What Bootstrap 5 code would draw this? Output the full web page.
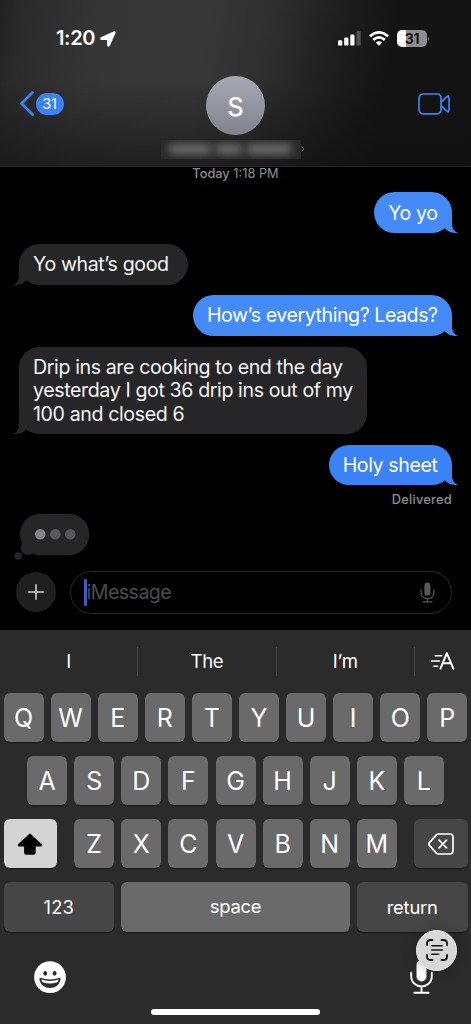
<!DOCTYPE html>
<html lang="en" data-bs-theme="dark">
<head>
<meta charset="utf-8">
<meta name="viewport" content="width=device-width, initial-scale=1">
<title>Messages</title>
<link href="https://cdn.jsdelivr.net/npm/bootstrap@5.3.0/dist/css/bootstrap.min.css" rel="stylesheet">
<style>
body{font-family:Inter,"Liberation Sans",sans-serif;background:#000;color:#fff;font-size:19.6px;line-height:23.4px;font-weight:400}
svg{display:block;flex:none}
.phone{width:471px;height:1024px;overflow:hidden}
.topbar{height:167px;border-bottom:1px solid #262626;
 background:linear-gradient(180deg,transparent 50%,rgba(16,16,16,.6) 100%),linear-gradient(100deg,#212121 0,#2a2a2a 5%,#353535 20%,#373737 42%,#303030 54%,#1c1c1c 70%,#141414 80%,#141414 100%)}
.status{height:76.4px;padding:1px 41px 0 56px}
.clock{font-size:20px;font-weight:600;letter-spacing:-.35px}
.batt{width:30px;height:17px;border-radius:5px;background:linear-gradient(90deg,#fff 0 9px,#8e8e8e 9px);color:#151515;font-size:14px;font-weight:700;line-height:17px;letter-spacing:-.3px}
.navrow{height:58.6px;padding:0 20px}
.unread{width:28px;height:22px;font-size:14.5px;line-height:22px;background:#3c82f7;letter-spacing:-.3px;transform:translateX(-8px)}
.avatar{width:59px;height:59px;background:linear-gradient(#a6a9b5,#80838c);font-size:25.5px;font-weight:500;padding-top:2px;margin-left:15px}
.contact{height:19px;margin-top:5px;padding-left:161px}
.redact{width:140px;height:19px;background:#292929;overflow:hidden;gap:3px;padding:0 7px}
.redact i{height:10px;border-radius:5px;background:#6e6e6e;filter:blur(4px)}
.stamp{font-size:12.8px;line-height:14px;color:#8e8e93;font-weight:400}
.thread{padding:11.4px 19px 0}
.bubble{padding:9.2px 14.4px 8.2px 14px;border-radius:20.5px;background:#262628;color:#f4f4f4;white-space:nowrap;margin-bottom:10.6px;letter-spacing:-.39px}
.bubble.roomy{padding-right:19.3px}
.bubble.mine{background:#448bf8;color:#fff}
.tail{bottom:0;left:-6px;color:#262628;transform:scaleX(-1)}
.mine .tail{left:auto;right:-6px;color:#448bf8;transform:none}
.bubble.latest{background:#3c82f7}
.latest .tail{color:#3c82f7}
.plus{width:40px;height:40px;background:#1f1f1f}
.field{height:43px;width:382px;border:1px solid #2a2a2c;padding:1px 16px 0 13px;color:#4c4c4e;letter-spacing:-.55px}
.caret{width:2.6px;height:27px;background:#4059c8;border-radius:1px}
.board{background:#2b2b2b;height:394px;padding:0 3.5px}
.sug{height:62.6px;margin:0 -3.5px;font-size:18.6px}
.sug .word{width:137.3px;letter-spacing:-.3px}
.rule{width:1px;height:29px;background:#424242}
.keys{gap:7.1px;height:49.3px;margin-bottom:14px}
.key{width:40px;height:49.3px;border-radius:6px;background:#6a6a6a;box-shadow:0 1.2px 0 #1b1b1b;font-size:25px;color:#fff;padding-top:2px}
.key.dim{background:#464646}
.key.wide{width:53.3px;padding-top:0}
.key.shift{background:#d4d4d4}
.key.caption-key{font-size:18.4px;letter-spacing:-.2px;width:110.6px}
.key.bar{padding:0 0 1px}
.scan{width:41px;height:41px;background:#d8d8d8;border:1px solid #eee;right:14px;top:929.5px;box-shadow:0 0 14px rgba(0,0,0,.25)}
.home{width:169px;height:6px;background:#fff;margin-top:15px}
</style>
</head>
<body>
<main class="phone position-relative d-flex flex-column">
 <header class="topbar">
  <div class="status d-flex align-items-center justify-content-between">
   <div class="d-flex align-items-center"><span class="clock">1:20</span>
    <svg class="ms-1" width="17" height="16" viewBox="-1 0 17 16"><path d="M1.2 6.9 13.7 1.1q1.6-.6 1 1L9.2 14.4q-1 1.5-1.4-.3V8.8q0-.5-.5-.5H1.7Q-.2 8 1.2 6.9Z" fill="#fff" stroke="#fff" stroke-width="1.4" stroke-linejoin="round"/></svg></div>
   <div class="d-flex align-items-center">
    <svg width="23" height="15" viewBox="0 0 23 15" fill="#fff"><rect y="9.3" width="4.2" height="5.3" rx="1.2"/><rect x="6.2" y="6.6" width="4.2" height="8" rx="1.2"/><rect x="12.3" y="3.6" width="4.2" height="11" rx="1.2"/><rect x="18.5" y="0" width="4.2" height="14.6" rx="1.2" fill="#515151"/></svg>
    <svg class="ms-2" width="20" height="15" viewBox="0 0 20 15" fill="none" stroke="#fff" stroke-width="2.7"><path d="M.9 5.2Q10-2.5 19.1 5.2M4.2 8.9Q10 4 15.8 8.9"/><path d="M6.8 11.6Q10 9 13.2 11.6L10 14.8Z" fill="#fff" stroke="none"/></svg>
    <div class="batt text-center ms-2">31</div>
    <svg width="3" height="6" viewBox="0 0 3 6"><path d="M1 .8Q3 3 1 5.2Z" fill="#8e8e8e"/></svg>
   </div>
  </div>
  <div class="navrow d-flex align-items-center justify-content-between">
   <div class="d-flex align-items-center" style="width:61px;margin-top:-4px">
    <svg width="14" height="25" viewBox="0 0 14 25" fill="none" stroke="#3c82f7" stroke-width="2.8" stroke-linecap="round" stroke-linejoin="round"><path d="M12.5 1.5 1.5 12.5 12.5 23.5"/></svg>
    <span class="unread rounded-pill text-center mx-auto">31</span></div>
   <div class="avatar rounded-circle d-flex align-items-center justify-content-center">S</div>
   <div class="d-flex justify-content-end" style="width:76px;margin-top:-4px;padding-right:1px"><svg width="32" height="22" viewBox="0 0 32 22" fill="none" stroke="#3c82f7" stroke-width="1.7" stroke-linejoin="round"><rect x="1" y="1" width="22" height="19.8" rx="4"/><path d="M23.2 8.8 29.1 3.5Q31 2.3 31 4.5V17.2Q31 19.4 29.1 18.2L23.2 13"/></svg></div>
  </div>
  <div class="contact d-flex align-items-center">
   <div class="redact d-flex align-items-center"><i style="width:44px"></i><i style="width:28px"></i><i style="width:46px"></i></div>
   <svg width="4" height="6" viewBox="0 0 4 6" fill="none" stroke="#777" stroke-width=".9"><path d="M.6.6 2.8 3 .6 5.4"/></svg>
  </div>
 </header>
 <div class="stamp text-center"><span class="fw-medium">Today</span> 1:18 PM</div>
 <section class="thread d-flex flex-column align-items-start">
  <div class="bubble mine align-self-end position-relative">Yo yo<svg class="tail position-absolute" width="20" height="20" viewBox="0 0 20 20"><path d="M14 0V10.5C14 15 16 18.6 20 20C14.5 20.4 10 18.7 7 15.4L0 8Z" fill="currentColor"/></svg></div>
  <div class="bubble roomy position-relative">Yo what’s good<svg class="tail position-absolute" width="20" height="20" viewBox="0 0 20 20"><path d="M14 0V10.5C14 15 16 18.6 20 20C14.5 20.4 10 18.7 7 15.4L0 8Z" fill="currentColor"/></svg></div>
  <div class="bubble mine align-self-end position-relative" style="letter-spacing:-.45px">How’s everything? Leads?<svg class="tail position-absolute" width="20" height="20" viewBox="0 0 20 20"><path d="M14 0V10.5C14 15 16 18.6 20 20C14.5 20.4 10 18.7 7 15.4L0 8Z" fill="currentColor"/></svg></div>
  <div class="bubble position-relative">Drip ins are cooking to end the day<br>yesterday I got 36 drip ins out of my<br>100 and closed 6<svg class="tail position-absolute" width="20" height="20" viewBox="0 0 20 20"><path d="M14 0V10.5C14 15 16 18.6 20 20C14.5 20.4 10 18.7 7 15.4L0 8Z" fill="currentColor"/></svg></div>
  <div class="bubble mine latest align-self-end position-relative mb-0">Holy sheet<svg class="tail position-absolute" width="20" height="20" viewBox="0 0 20 20"><path d="M14 0V10.5C14 15 16 18.6 20 20C14.5 20.4 10 18.7 7 15.4L0 8Z" fill="currentColor"/></svg></div>
  <div class="stamp fw-medium align-self-end" style="margin-top:7.5px;letter-spacing:.25px">Delivered</div>
  <svg width="79" height="47" viewBox="0 0 79 47" style="margin:5.6px 0 0 -8px"><g fill="#262628"><rect x="9" y=".7" width="69.3" height="41.6" rx="20.8"/><circle cx="16.5" cy="35.3" r="6.7"/><circle cx="7.2" cy="43" r="3.7"/></g><circle cx="29.2" cy="21.2" r="5.3" fill="#838385"/><circle cx="44.3" cy="21.2" r="5.3" fill="#58585a"/><circle cx="59.3" cy="21.2" r="5.3" fill="#58585a"/></svg>
 </section>
 <div class="d-flex align-items-center" style="padding:0 19px 0 16px;margin-top:11.4px">
  <div class="plus rounded-circle d-flex align-items-center justify-content-center"><svg width="16" height="16" viewBox="0 0 16 16" stroke="#aaa" stroke-width="2" stroke-linecap="round"><path d="M8 1V15M1 8H15"/></svg></div>
  <div class="field rounded-pill d-flex align-items-center ms-auto"><span class="caret"></span><span>iMessage</span>
   <svg class="ms-auto" width="15" height="21" viewBox="0 0 15 21" fill="none" stroke="#58585a" stroke-width="1.3" stroke-linecap="round"><rect x="4.4" y=".6" width="6" height="13" rx="3" fill="#58585a" stroke="none"/><path d="M1 8V10.5C1 18.6 13.9 18.6 13.9 10.5V8M7.5 16.6V19.8M3 19.8H12"/></svg></div>
 </div>
 <section class="board mt-auto">
  <div class="sug d-flex align-items-center">
   <div class="word text-center">I</div><div class="rule"></div><div class="word text-center">The</div><div class="rule"></div><div class="word text-center">I’m</div><div class="rule"></div>
   <svg style="margin-left:16px" width="25" height="18" viewBox="0 0 25 18" fill="none" stroke="#fff" stroke-linecap="round" stroke-linejoin="round"><path d="M9.5 16.6 15.8 1.2 22.3 16.6M11.7 11.3H19.9" stroke-width="2"/><path d="M4.2 3.7H10.8M.8 9H8.5M2.6 14.3H6.6" stroke-width="1.5"/></svg>
  </div>
  <div class="keys d-flex">
   <div class="key d-flex align-items-center justify-content-center">Q</div><div class="key d-flex align-items-center justify-content-center">W</div><div class="key d-flex align-items-center justify-content-center">E</div><div class="key d-flex align-items-center justify-content-center">R</div><div class="key d-flex align-items-center justify-content-center">T</div><div class="key d-flex align-items-center justify-content-center">Y</div><div class="key d-flex align-items-center justify-content-center">U</div><div class="key d-flex align-items-center justify-content-center">I</div><div class="key d-flex align-items-center justify-content-center">O</div><div class="key d-flex align-items-center justify-content-center">P</div>
  </div>
  <div class="keys d-flex justify-content-center">
   <div class="key d-flex align-items-center justify-content-center">A</div><div class="key d-flex align-items-center justify-content-center">S</div><div class="key d-flex align-items-center justify-content-center">D</div><div class="key d-flex align-items-center justify-content-center">F</div><div class="key d-flex align-items-center justify-content-center">G</div><div class="key d-flex align-items-center justify-content-center">H</div><div class="key d-flex align-items-center justify-content-center">J</div><div class="key d-flex align-items-center justify-content-center">K</div><div class="key d-flex align-items-center justify-content-center">L</div>
  </div>
  <div class="keys d-flex justify-content-between">
   <div class="key wide shift d-flex align-items-center justify-content-center"><svg width="26" height="22" viewBox="0 0 26 22"><path d="M12 1.2Q13 0 14 1.2L24.8 11.2Q26 13.1 24 13.4H18.7V19.5Q18.7 21.8 16.5 21.8H9.3Q7.1 21.8 7.1 19.5V13.4H1.8Q0 13 1.1 11.2Z"/></svg></div>
   <div class="keys d-flex mb-0"><div class="key d-flex align-items-center justify-content-center">Z</div><div class="key d-flex align-items-center justify-content-center">X</div><div class="key d-flex align-items-center justify-content-center">C</div><div class="key d-flex align-items-center justify-content-center">V</div><div class="key d-flex align-items-center justify-content-center">B</div><div class="key d-flex align-items-center justify-content-center">N</div><div class="key d-flex align-items-center justify-content-center">M</div></div>
   <div class="key dim wide d-flex align-items-center justify-content-center"><svg width="26" height="22" viewBox="0 0 26 22" fill="none" stroke="#fff" stroke-width="1.7" stroke-linecap="round" stroke-linejoin="round"><path d="M10.5 1H21.7Q25 1 25 4.3V17.6Q25 21 21.7 21H10.5Q9.3 21 8.4 20.1L1.4 12.4Q.4 11 1.4 9.6L8.4 1.9Q9.3 1 10.5 1ZM11 7 18.6 15M18.6 7 11 15"/></svg></div>
  </div>
  <div class="keys d-flex">
   <div class="key dim caption-key d-flex align-items-center justify-content-center" style="letter-spacing:.2px">123</div>
   <div class="key caption-key bar d-flex align-items-center justify-content-center flex-fill">space</div>
   <div class="key dim caption-key d-flex align-items-center justify-content-center">return</div>
  </div>
  <div class="d-flex justify-content-between" style="padding:14.4px 35px 0 30.5px">
   <svg width="32" height="33" viewBox="0 0 32 33" style="margin-top:1px"><circle cx="16" cy="16.2" r="15.9" fill="#fff"/><g fill="#2b2b2b"><ellipse cx="11.2" cy="12.3" rx="1.9" ry="2.4"/><ellipse cx="20.6" cy="12.3" rx="1.9" ry="2.4"/><path d="M6.2 16.8Q16 20 25.8 16.8Q27 17 26.5 19Q24.2 27 16 27T5.5 19Q5 17 6.2 16.8Z"/></g><path d="M7.3 18.5Q16 21.3 24.7 18.5Q24.5 20.5 22.8 21.4Q16 23.6 9.2 21.4Q7.5 20.5 7.3 18.5Z" fill="#fff"/></svg>
   <svg width="23" height="34" viewBox="0 0 23 34" fill="none" stroke="#fff" stroke-width="1.9" stroke-linecap="round"><rect x="6.5" y="0" width="10" height="21.5" rx="5" fill="#fff" stroke="none"/><path d="M1.2 12.6V16C1.2 29.8 21.8 29.8 21.8 16V12.6M11.5 26.4V32.6M4.3 32.7H18.7"/></svg>
  </div>
  <div class="home rounded-pill mx-auto"></div>
 </section>
 <div class="scan position-absolute rounded-circle d-flex align-items-center justify-content-center"><svg width="22" height="22" viewBox="0 0 22 22" fill="none" stroke="#151515" stroke-width="1.9" stroke-linecap="round"><path d="M1 6V4.5Q1 1 4.5 1H6.5M15.5 1H17.5Q21 1 21 4.5V6M21 16V17.5Q21 21 17.5 21H15.5M6.5 21H4.5Q1 21 1 17.5V16"/><path d="M5.7 6.7H16.3M5.7 11H16.3M5.7 15.2H12.6" stroke-width="1.6"/></svg></div>
</main>
<script src="https://cdn.jsdelivr.net/npm/bootstrap@5.3.0/dist/js/bootstrap.bundle.min.js"></script>
</body>
</html>
